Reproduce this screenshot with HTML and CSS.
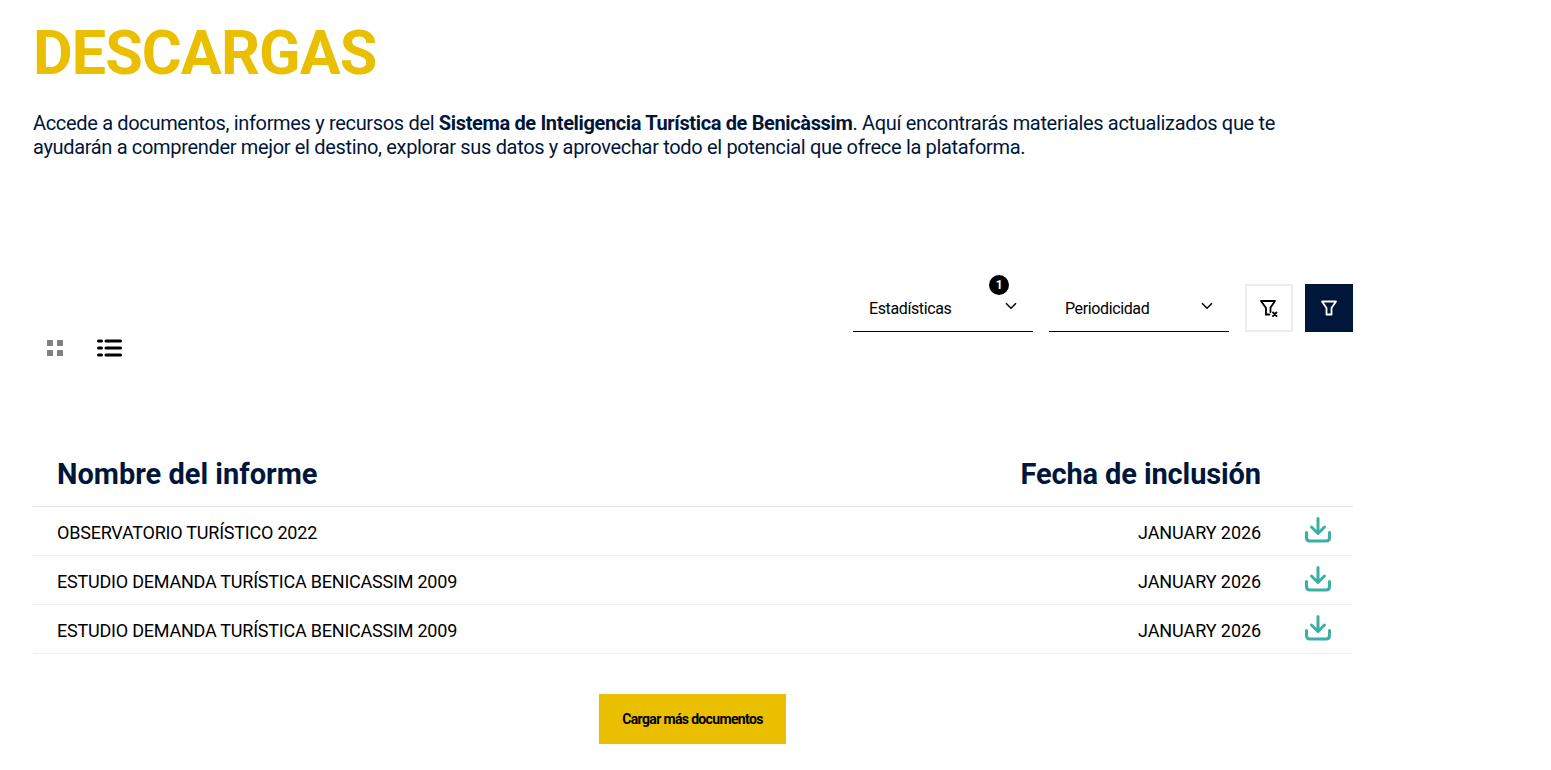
FILE: index.html
```html
<!DOCTYPE html>
<html lang="es">
<head>
  <meta charset="UTF-8" />
  <meta name="viewport" content="width=device-width, initial-scale=1" />
  <title>Descargas</title>
  <link rel="stylesheet" href="styles.css">
</head>
<body>

<main class="pagina">
  <header class="cabecera">
    <h1>DESCARGAS</h1>
    <p>Accede a documentos, informes y recursos del <strong>Sistema de Inteligencia Turística de Benicàssim</strong>. Aquí encontrarás materiales actualizados que te ayudarán a comprender mejor el destino, explorar sus datos y aprovechar todo el potencial que ofrece la plataforma.</p>
  </header>

  <section class="filtros">
    <div class="selector">
      <span>Estadísticas</span>
      <span class="badge">1</span>
      <svg class="chevron" viewBox="0 0 12 8"><path d="M1 1.2 6 6.2 11 1.2" /></svg>
    </div>
    <div class="selector">
      <span>Periodicidad</span>
      <svg class="chevron" viewBox="0 0 12 8"><path d="M1 1.2 6 6.2 11 1.2" /></svg>
    </div>
    <button class="btn-filtro limpiar" type="button" aria-label="Limpiar filtros">
      <svg viewBox="0 0 20 20" width="20" height="20"><path d="M7 16.500V10L2 3H16L11.500 9.500V14" /><path d="M7 16.500H10.500" /><path d="M14 14.500 17.500 18M17.500 14.500 14 18" /></svg>
    </button>
    <button class="btn-filtro aplicar" type="button" aria-label="Filtrar">
      <svg viewBox="0 0 20 20" width="20" height="20"><path d="M3 3.500H17L12.500 10V16.500H7.500V10Z" /></svg>
    </button>
  </section>

  <div class="vistas">
    <svg class="vista-grid" viewBox="0 0 16 16" width="16" height="16">
      <rect x="0" y="0" width="6" height="6" rx="0.5" /><rect x="10" y="0" width="6" height="6" rx="0.5" />
      <rect x="0" y="10" width="6" height="6" rx="0.5" /><rect x="10" y="10" width="6" height="6" rx="0.5" />
    </svg>
    <svg class="vista-lista" viewBox="0 0 25 18" width="25" height="18">
      <path d="M1.500 2H4.500M9 2H23.500M1.500 9H4.500M9 9H23.500M1.500 16H4.500M9 16H23.500" />
    </svg>
  </div>

  <section class="tabla">
    <div class="fila titulos">
      <span>Nombre del informe</span>
      <span class="fecha">Fecha de inclusión</span>
    </div>
    <div class="fila">
      <span>OBSERVATORIO TURÍSTICO 2022</span>
      <span class="fecha">JANUARY 2026</span>
      <svg class="descarga" viewBox="0 0 26 26"><path d="M13 1.500V16M6.500 10 13 16.500 19.500 10" /><path d="M1.500 15.500V20.500Q1.500 24 5 24H21Q24.500 24 24.500 20.500V15.500" /></svg>
    </div>
    <div class="fila">
      <span>ESTUDIO DEMANDA TURÍSTICA BENICASSIM 2009</span>
      <span class="fecha">JANUARY 2026</span>
      <svg class="descarga" viewBox="0 0 26 26"><path d="M13 1.500V16M6.500 10 13 16.500 19.500 10" /><path d="M1.500 15.500V20.500Q1.500 24 5 24H21Q24.500 24 24.500 20.500V15.500" /></svg>
    </div>
    <div class="fila">
      <span>ESTUDIO DEMANDA TURÍSTICA BENICASSIM 2009</span>
      <span class="fecha">JANUARY 2026</span>
      <svg class="descarga" viewBox="0 0 26 26"><path d="M13 1.500V16M6.500 10 13 16.500 19.500 10" /><path d="M1.500 15.500V20.500Q1.500 24 5 24H21Q24.500 24 24.500 20.500V15.500" /></svg>
    </div>
  </section>

  <div class="acciones">
    <button class="cargar" type="button">Cargar más documentos</button>
  </div>
</main>

</body>
</html>
```

FILE: styles.css
```css
* {
  box-sizing: border-box;
}

body {
  font-family: Roboto, 'Liberation Sans', sans-serif;
  margin: 0;
  background: white;
  color: #000;
}

.pagina {
  width: 1320px;
  margin-left: 33px;
  padding-top: 19px;
}

/* Cabecera */
h1 {
  margin: 0;
  font-size: 61px;
  line-height: 68px;
  font-weight: bold;
  color: #e9bf00;
  letter-spacing: -0.9px;
}

.cabecera p {
  margin: 24px 0 0;
  max-width: 1280px;
  font-size: 20px;
  line-height: 24px;
  color: #00163a;
  letter-spacing: -0.33px;
}

.cabecera strong {
  letter-spacing: -0.36px;
}

/* Filtros */
.filtros {
  display: flex;
  justify-content: flex-end;
  margin-top: 125px;
}

.selector {
  position: relative;
  display: flex;
  align-items: center;
  justify-content: space-between;
  width: 180px;
  height: 48px;
  margin-right: 16px;
  padding: 2px 16px 0;
  border-bottom: 1px solid #000;
  font-size: 16px;
  letter-spacing: -0.38px;
}

.chevron {
  width: 12px;
  height: 8px;
  margin-bottom: 5px;
  fill: none;
  stroke: #000;
  stroke-width: 1.5;
}

.badge {
  position: absolute;
  top: -9px;
  right: 24px;
  width: 20px;
  height: 20px;
  border-radius: 50%;
  background: #000;
  color: white;
  font-size: 12px;
  font-weight: bold;
  line-height: 20px;
  text-align: center;
}

.btn-filtro {
  display: flex;
  align-items: center;
  justify-content: center;
  width: 48px;
  height: 48px;
  padding: 0;
  border: 2px solid #e9edf0;
  background: white;
}

.btn-filtro svg {
  fill: none;
  stroke: #000;
  stroke-width: 1.8;
  stroke-linejoin: round;
  stroke-linecap: round;
}

.btn-filtro.aplicar {
  margin-left: 12px;
  border: none;
  background: #00163a;
}

.btn-filtro.aplicar svg {
  stroke: white;
}

/* Vistas */
.vistas {
  display: flex;
  align-items: center;
  gap: 34px;
  height: 22px;
  margin-top: 5px;
  padding-left: 14px;
}

.vista-grid {
  fill: #808080;
}

.vista-lista {
  fill: none;
  stroke: #000;
  stroke-width: 3;
  stroke-linecap: round;
}

/* Tabla */
.tabla {
  margin-top: 82px;
}

.fila {
  display: flex;
  align-items: center;
  height: 49px;
  padding: 2px 22px 0 24px;
  border-bottom: 1px solid #f0f0f0;
  font-size: 18px;
  letter-spacing: -0.22px;
}

.fila span:first-child {
  flex-grow: 1;
}

.fila .fecha {
  margin-right: 44px;
  letter-spacing: -0.08px;
}

.fila.titulos {
  height: 66px;
  padding-top: 0;
  border-bottom-color: #e2e2e2;
  font-size: 29px;
  font-weight: bold;
  color: #00163a;
  letter-spacing: 0;
}

.fila.titulos .fecha {
  margin-right: 70px;
  letter-spacing: -0.12px;
}

.descarga {
  width: 26px;
  height: 26px;
  margin-bottom: 5px;
  fill: none;
  stroke: #3bb0a2;
  stroke-width: 3;
  stroke-linejoin: round;
  stroke-linecap: round;
}

/* Boton cargar */
.acciones {
  display: flex;
  justify-content: center;
  margin-top: 40px;
  padding-right: 1px;
}

.cargar {
  width: 187px;
  height: 50px;
  border: none;
  background: #e9bf00;
  color: #000;
  font-family: 'Liberation Sans Narrow', Roboto, sans-serif;
  font-size: 14px;
  font-weight: bold;
  letter-spacing: -0.65px;
}
```
